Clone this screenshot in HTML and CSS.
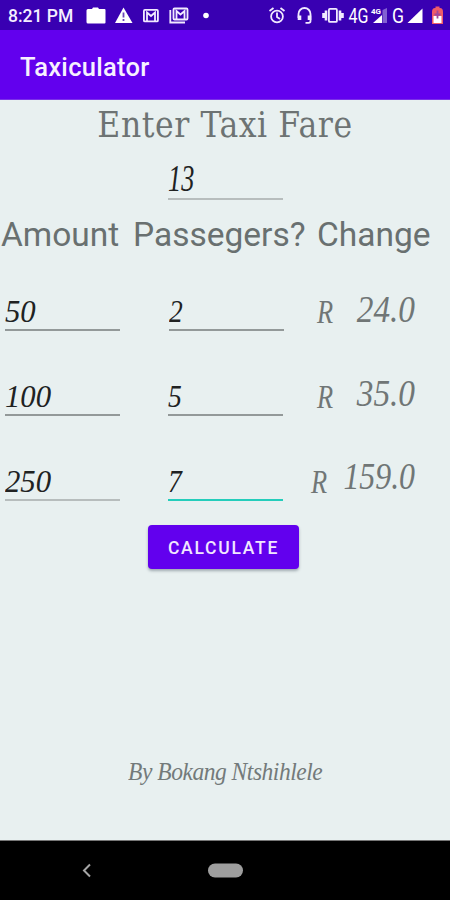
FILE: index.html
```html
<!DOCTYPE html>
<html lang="en">
<head>
<meta charset="utf-8">
<title>Taxiculator</title>
<link rel="stylesheet" href="styles.css">
</head>
<body>
<div class="screen">
  <header class="status">
    <span class="time">8:21 PM</span>
    <svg class="status-icons" width="377" height="30" viewBox="73 0 377 30" fill="#fff">
      <path d="M88 9h4l1-1.500h5l1 1.500h5.500q1 0 1 1V22.500q0 1-1 1H88q-1.500 0-1.500-1.500V10.500q0-1.500 1.500-1.500z"/>
      <path d="M123.500 7.500L132.500 23h-17.500z"/><path d="M123.500 12.500v5M123.500 19v2" stroke="#6b45ba" stroke-width="1.800"/>
      <g fill="none" stroke="#f1eaff" stroke-width="1.800">
        <rect x="143.900" y="9.900" width="14" height="11.500" rx="1"/><path d="M147 21V12.500l4 3.500 4-3.500V21"/>
        <rect x="173.500" y="8.500" width="14" height="11" rx="1"/><path d="M176.500 19v-8l4 3.500 4-3.500v8M170.300 10v12.500H185"/>
        <circle cx="277" cy="16.500" r="5.900"/><path d="M277 12.500v4.500l3 2M269.500 11l4-3M284.500 11l-4-3"/>
        <path d="M298.500 18v-4a6 6 0 0 1 12 0v7q0 1.800-2 1.800h-3"/><path d="M299.500 15.500V20M309.500 15.500V20" stroke-width="3.600"/>
        <rect x="328.900" y="8.900" width="8" height="13" rx="1"/><path d="M326 10.500v10M340 10.500v10M323.500 13v5M342.500 13v5" stroke-width="2.600"/>
      </g>
      <circle cx="206" cy="15.500" r="2.800"/>
      <text x="348.500" y="23" class="net" textLength="20" lengthAdjust="spacingAndGlyphs">4G</text>
      <text x="371" y="14" class="mini" textLength="10" lengthAdjust="spacingAndGlyphs">4G</text>
      <path d="M373 23l9-8v8z"/><path d="M382.500 10l4.500-2v15h-4.500z" fill="#8260d2"/>
      <text x="392" y="23" class="net" textLength="12" lengthAdjust="spacingAndGlyphs">G</text>
      <path d="M407.500 23L422.500 8.500V23z"/>
      <path d="M432 24V12q0-4 3-4h.5V6.500h4V8h.5q3 0 3 4v12z" fill="#ef5b69"/><path d="M433.500 16h8v7h-8z"/><path d="M437.500 10.500v8M434.500 14.500h6" stroke="#a0489c" stroke-width="1.800"/>
    </svg>
  </header>
  <div class="appbar"><h1>Taxiculator</h1></div>
  <main>
    <h2>Enter Taxi Fare</h2>
    <div class="field fare"><span>13</span></div>
    <div class="heads"><span class="h-amount">Amount</span><span class="h-pass">Passegers?</span><span class="h-change">Change</span></div>
    <div class="row">
      <div class="field amount"><span>50</span></div>
      <div class="field count shifted"><span>2</span></div>
      <div class="result first"><span class="cur">R</span><span class="val">24.0</span></div>
    </div>
    <div class="row">
      <div class="field amount"><span>100</span></div>
      <div class="field count"><span>5</span></div>
      <div class="result"><span class="cur">R</span><span class="val">35.0</span></div>
    </div>
    <div class="row">
      <div class="field amount light"><span>250</span></div>
      <div class="field count active"><span>7</span></div>
      <div class="result wide"><span class="cur">R</span><span class="val">159.0</span></div>
    </div>
    <button class="calc">CALCULATE</button>
    <p class="by">By Bokang Ntshihlele</p>
  </main>
  <nav>
    <svg width="450" height="59" viewBox="0 841 450 59"><path d="M90 864.500l-6 6 6 6" fill="none" stroke="#a5a5a5" stroke-width="2"/><rect x="208" y="863.500" width="35" height="14" rx="7" fill="#9e9e9e"/></svg>
  </nav>
</div>
</body>
</html>
```
FILE: styles.css
```css
* { box-sizing: border-box; }
body { margin: 0; background: #e8f0f0; font-family: Roboto, sans-serif; }
.screen { width: 450px; height: 900px; display: flex; flex-direction: column; overflow: hidden; }
.status { height: 30px; flex: none; display: flex; background: #3900b2; color: #f4efff; }
.time { width: 73px; flex: none; padding-left: 8px; font-size: 17.5px; font-weight: 500; line-height: 32px; white-space: nowrap; }
.status-icons { display: block; flex: none; }
.net { font-size: 20.5px; }
.mini { font-size: 7px; font-weight: 700; }
.appbar { height: 70px; flex: none; background: #6200ee; border-bottom: 1px solid #7b31e8; padding-left: 20px; }
h1 { margin: 0; color: #f7f0ff; font-size: 25.5px; font-weight: 500; line-height: 74px; letter-spacing: 0.3px; }
main { height: 740px; flex: none; display: flex; flex-direction: column; }
h2 { margin: 0; height: 50px; text-align: center; font: 400 35px/50px "DejaVu Serif Condensed", "DejaVu Serif", serif; font-stretch: condensed; color: #6d7373; white-space: nowrap; letter-spacing: 0.6px; }
.field { width: 115px; flex: none; border-bottom: 2px solid #939999; font: italic 32px/36px "Liberation Serif", serif; color: #202222; height: 38px; white-space: nowrap; }
.field span { display: inline-block; transform-origin: left; }
.fare { margin-left: 168px; height: 50px; font-size: 37px; line-height: 57px; border-color: #b7bdbd; }
.fare span { transform: scaleX(0.71); }
.heads { height: 46px; display: flex; margin-top: 11px; font-size: 33.5px; line-height: 47px; color: #697070; white-space: nowrap; }
.h-amount { width: 133px; padding-left: 1px; }
.h-pass { width: 184px; }
.row { height: 85px; flex: none; display: flex; align-items: flex-end; padding-left: 5px; }
.heads + .row { height: 74px; }
.amount span { transform: scaleX(0.96); }
.count { margin-left: 48px; }
.count span { transform: scaleX(0.86); }
.count.shifted { position: relative; left: 1px; }
.light { border-color: #b7bdbd; }
.active { border-color: #24cdbb; }
.result { flex: 1; display: flex; justify-content: flex-end; align-items: baseline; padding-right: 35px; height: 47px; font: italic 37px/47px "Liberation Serif", serif; color: #707676; }
.cur { font-size: 33px; width: 20px; transform: scaleX(0.8) translateY(3px); transform-origin: left; margin-right: 18px; }
.val { transform: translateY(1px) scaleX(0.9); transform-origin: right; width: 60px; display: flex; justify-content: flex-end; }
.first .val { transform: translateY(2px) scaleX(0.9); }
.wide .val { width: 71px; transform: translateY(-1px) scaleX(0.86); }
.wide .cur { margin-right: 13px; }
.calc { width: 151px; height: 44px; margin: 24px 0 0 148px; flex: none; padding: 1px 0 0; border: 0; border-radius: 4px; background: #6200ee; color: #f1e6ff; font: 500 17.5px/42px Roboto, sans-serif; letter-spacing: 1.75px; box-shadow: 0 2px 3px #9faab0; }
.by { margin: 186px 0 0 128px; font: italic 25px/34px "Liberation Serif", serif; color: #737a7a; white-space: nowrap; transform: scaleX(0.94); transform-origin: left; letter-spacing: -0.5px; }
nav { height: 60px; flex: none; background: #000; border-top: 1px solid #777; }
nav svg { display: block; }
```
